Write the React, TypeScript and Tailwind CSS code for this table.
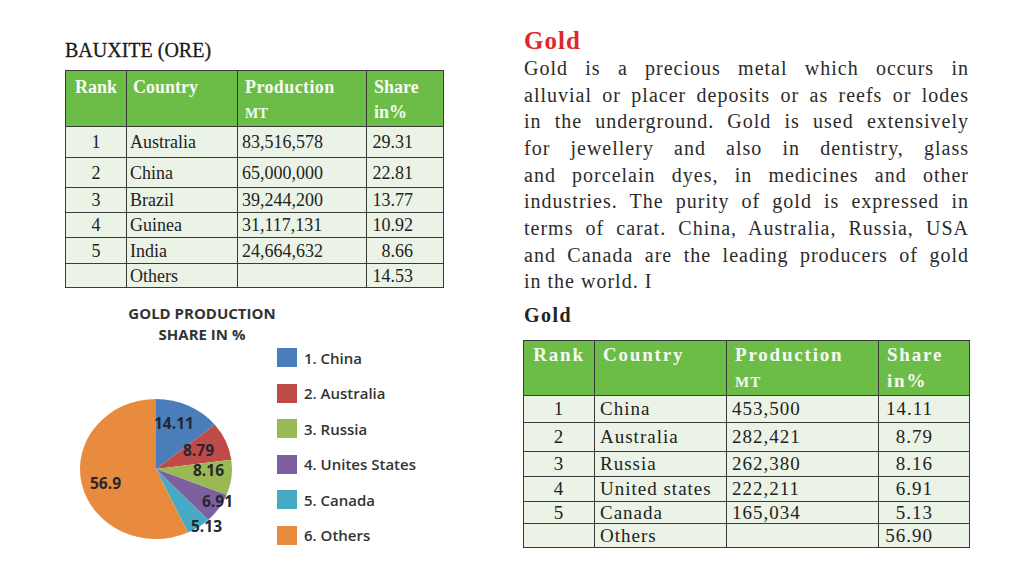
import React from 'react';

type Row = { rank: string; country: string; production: string; share: string; h: string };

const bauxite: Row[] = [
  { rank: '1', country: 'Australia', production: '83,516,578', share: '29.31', h: 'h-[31px]' },
  { rank: '2', country: 'China', production: '65,000,000', share: '22.81', h: 'h-[30px]' },
  { rank: '3', country: 'Brazil', production: '39,244,200', share: '13.77', h: 'h-[25px]' },
  { rank: '4', country: 'Guinea', production: '31,117,131', share: '10.92', h: 'h-[25px]' },
  { rank: '5', country: 'India', production: '24,664,632', share: '8.66', h: 'h-[26px]' },
  { rank: '', country: 'Others', production: '', share: '14.53', h: 'h-[24px]' },
];

const gold: Row[] = [
  { rank: '1', country: 'China', production: '453,500', share: '14.11', h: 'h-[27px]' },
  { rank: '2', country: 'Australia', production: '282,421', share: '8.79', h: 'h-[29px]' },
  { rank: '3', country: 'Russia', production: '262,380', share: '8.16', h: 'h-[25px]' },
  { rank: '4', country: 'United states', production: '222,211', share: '6.91', h: 'h-[25px]' },
  { rank: '5', country: 'Canada', production: '165,034', share: '5.13', h: 'h-[22px]' },
  { rank: '', country: 'Others', production: '', share: '56.90', h: 'h-[24px]' },
];

const slices = [
  { label: '1. China', value: 14.11, text: '14.11', color: '#4a7ebb', lx: 89, ly: 82 },
  { label: '2. Australia', value: 8.79, text: '8.79', color: '#be4b48', lx: 118, ly: 109 },
  { label: '3. Russia', value: 8.16, text: '8.16', color: '#98b954', lx: 128, ly: 129 },
  { label: '4. Unites States', value: 6.91, text: '6.91', color: '#7d60a0', lx: 137, ly: 160 },
  { label: '5. Canada', value: 5.13, text: '5.13', color: '#46aac5', lx: 126, ly: 185 },
  { label: '6. Others', value: 56.9, text: '56.9', color: '#e98b3f', lx: 25, ly: 142 },
];

const paragraph = [
  'Gold is a precious metal which occurs in',
  'alluvial or placer deposits or as reefs or lodes',
  'in the underground. Gold is used extensively',
  'for jewellery and also in dentistry, glass',
  'and porcelain dyes, in medicines and other',
  'industries. The purity of gold is expressed in',
  'terms of carat. China, Australia, Russia, USA',
  'and Canada are the leading producers of gold',
  'in the world. I',
];

const border = 'border border-[#3a3a3a]';

function BauxiteTable() {
  return (
    <table className="border-collapse table-fixed w-[378px] font-['Liberation_Serif',serif] text-[18px] text-[#222]">
      <colgroup>
        <col className="w-[61px]" />
        <col className="w-[111px]" />
        <col className="w-[129px]" />
        <col className="w-[77px]" />
      </colgroup>
      <thead>
        <tr className="h-[56px] bg-[#6cbd47] text-[#f6fbf2] font-bold align-top leading-[25px]">
          <th className={`${border} pt-1 text-center font-bold`}>Rank</th>
          <th className={`${border} pt-1 pl-[6px] text-left font-bold`}>Country</th>
          <th className={`${border} pt-1 pl-[7px] text-left font-bold tracking-[0.4px]`}>
            Production
            <br />
            <span className="text-[14px]">MT</span>
          </th>
          <th className={`${border} pt-1 pl-[7px] text-left font-bold`}>
            Share
            <br />
            in%
          </th>
        </tr>
      </thead>
      <tbody className="bg-[#eaf3e6]">
        {bauxite.map((r, i) => (
          <tr key={i} className={`${r.h} leading-[20px]`}>
            <td className={`${border} text-center`}>{r.rank}</td>
            <td className={`${border} pl-[3px]`}>{r.country}</td>
            <td className={`${border} pl-[4px]`}>{r.production}</td>
            <td className={`${border} pr-[30px] text-right`}>{r.share}</td>
          </tr>
        ))}
      </tbody>
    </table>
  );
}

function GoldTable() {
  return (
    <table className="border-collapse table-fixed w-[446px] -ml-[1px] font-['Liberation_Serif',serif] text-[19px] text-[#222] tracking-[1px]">
      <colgroup>
        <col className="w-[71px]" />
        <col className="w-[132px]" />
        <col className="w-[152px]" />
        <col className="w-[91px]" />
      </colgroup>
      <thead>
        <tr className="h-[54px] bg-[#6cbd47] text-[#f6fbf2] align-top leading-[26px] text-[19px] tracking-[1.8px]">
          <th className={`${border} pt-[1px] text-center font-bold`}>Rank</th>
          <th className={`${border} pt-[1px] pl-[8px] text-left font-bold`}>Country</th>
          <th className={`${border} pt-[1px] pl-[8px] text-left font-bold`}>
            Production
            <br />
            <span className="text-[15px] tracking-[1px]">MT</span>
          </th>
          <th className={`${border} pt-[1px] pl-[8px] text-left font-bold`}>
            Share
            <br />
            in%
          </th>
        </tr>
      </thead>
      <tbody className="bg-[#eaf3e6]">
        {gold.map((r, i) => (
          <tr key={i} className={`${r.h} leading-[20px]`}>
            <td className={`${border} text-center`}>{r.rank}</td>
            <td className={`${border} pl-[5px]`}>{r.country}</td>
            <td className={`${border} pl-[5px]`}>{r.production}</td>
            <td className={`${border} pr-[36px] text-right`}>{r.share}</td>
          </tr>
        ))}
      </tbody>
    </table>
  );
}

function PieChart() {
  const cx = 91;
  const cy = 122;
  const rx = 76;
  const ry = 70;
  const pt = (f: number) => {
    const a = f * 2 * Math.PI;
    return [cx + rx * Math.sin(a), cy - ry * Math.cos(a)];
  };
  let acc = 0;
  const paths = slices.map((s) => {
    const start = acc / 100;
    acc += s.value;
    const end = acc / 100;
    const [x1, y1] = pt(start);
    const [x2, y2] = pt(end);
    const large = end - start > 0.5 ? 1 : 0;
    return {
      color: s.color,
      d: `M${cx} ${cy} L${x1} ${y1} A${rx} ${ry} 0 ${large} 1 ${x2} ${y2} Z`,
    };
  });

  return (
    <svg width="205" height="196" viewBox="0 0 205 196" className="shrink-0">
      {paths.map((p, i) => (
        <path key={i} d={p.d} fill={p.color} />
      ))}
      {slices.map((s, i) => (
        <text
          key={i}
          x={s.lx}
          y={s.ly}
          fontSize="15.5"
          fontWeight="700"
          fill="#262630"
          fontFamily="'Open Sans', sans-serif"
        >
          {s.text}
        </text>
      ))}
    </svg>
  );
}

export default function App() {
  return (
    <div className="w-[1024px] h-[576px] bg-white flex pl-[65px] overflow-hidden">
      {/* left column */}
      <div className="w-[378px] shrink-0 pt-[38px]">
        <div className="font-['Liberation_Serif',serif] text-[20px] leading-[24px] text-[#1a1a1a] [-webkit-text-stroke:0.3px_#1a1a1a]">
          BAUXITE (ORE)
        </div>
        <div className="mt-[8px]">
          <BauxiteTable />
        </div>

        <div className="w-[274px] mt-[15px] text-center font-['Open_Sans',sans-serif] font-bold text-[15px] leading-[21px] text-[#333]">
          GOLD PRODUCTION
          <br />
          SHARE IN %
        </div>

        <div className="flex mt-[2px]">
          <PieChart />
          <div className="ml-[7px] pt-[1px] flex flex-col gap-[16px]">
            {slices.map((s) => (
              <div key={s.label} className="flex items-center h-[19.5px] gap-[7px]">
                <span className="w-[20px] h-[19px]" style={{ backgroundColor: s.color }} />
                <span className="font-['Open_Sans',sans-serif] font-semibold text-[15px] text-[#333]">{s.label}</span>
              </div>
            ))}
          </div>
        </div>
      </div>

      {/* right column */}
      <div className="ml-[81px] w-[445px] shrink-0 pt-[27px] font-['Liberation_Serif',serif]">
        <div className="text-[25px] leading-[28px] font-bold text-[#e2262c] tracking-[1px]">Gold</div>
        <div className="text-[20px] leading-[26.67px] text-[#2b2b2b] tracking-[1px]">
          {paragraph.map((line, i) => (
            <span
              key={i}
              className={i < paragraph.length - 1 ? 'block text-justify [text-align-last:justify]' : 'block'}
            >
              {line}
            </span>
          ))}
        </div>
        <div className="mt-[7px] text-[20px] leading-[26px] font-bold text-[#222] tracking-[1.5px]">Gold</div>
        <div className="mt-[12px]">
          <GoldTable />
        </div>
      </div>
    </div>
  );
}
